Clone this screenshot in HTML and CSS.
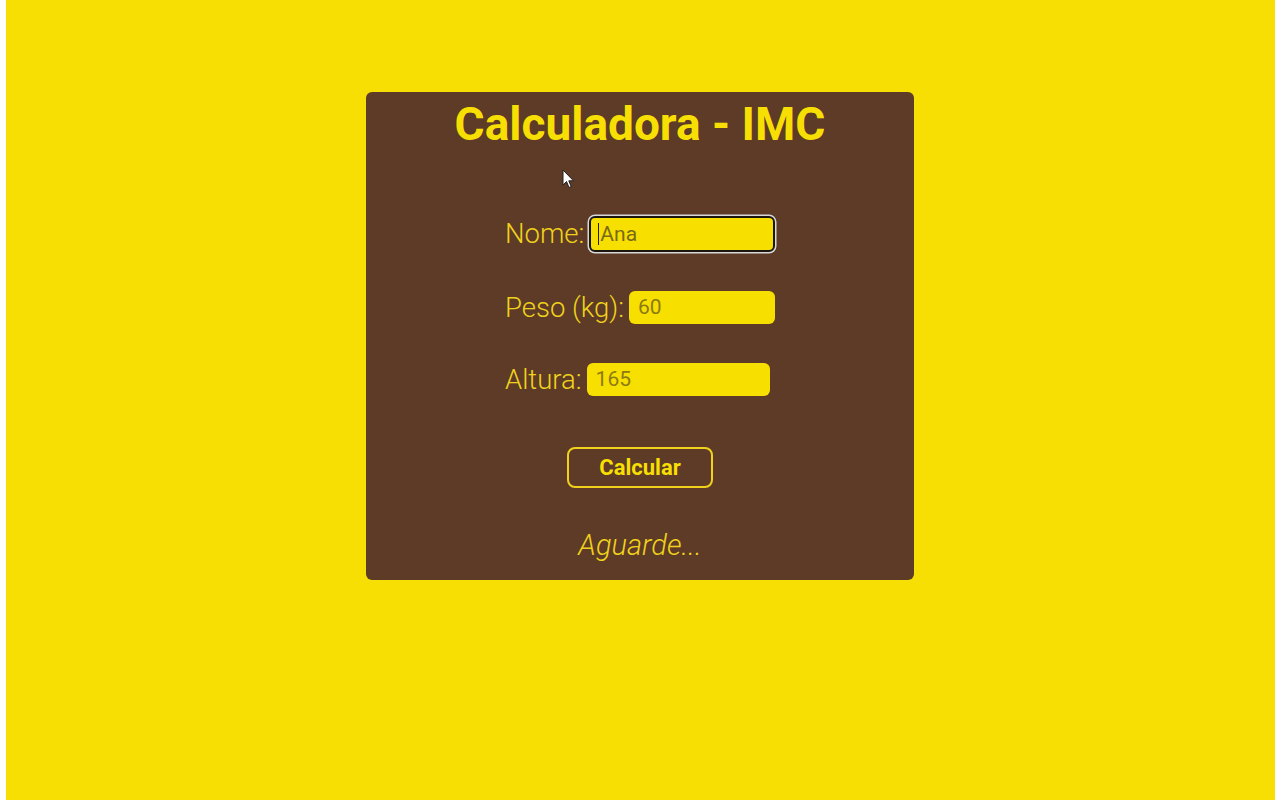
FILE: index.html
```html
<!DOCTYPE html>
<html lang="pt-BR">
<head>
<meta charset="utf-8">
<title>Calculadora - IMC</title>
<link rel="stylesheet" href="styles.css">
</head>
<body>
<div class="page">
  <main class="card">
    <h1 class="title">Calculadora - IMC</h1>
    <form class="form">
      <div class="row">
        <label class="label" for="nome">Nome:</label>
        <div class="input input-focus input-nome"><span class="caret"></span>Ana</div>
      </div>
      <div class="row">
        <label class="label" for="peso">Peso (kg):</label>
        <div class="input input-peso">60</div>
      </div>
      <div class="row">
        <label class="label" for="altura">Altura:</label>
        <div class="input input-altura">165</div>
      </div>
    </form>
    <button class="btn" type="button">Calcular</button>
    <p class="result">Aguarde...</p>
    <svg class="pointer" width="14" height="22" viewBox="0 0 14 22"><path d="M1 1 L1 16 L4.5 12.5 L7 18.5 L9.2 17.6 L6.8 11.8 L11.5 11.8 Z" fill="#fff" stroke="#222" stroke-width="1"/></svg>
  </main>
</div>
</body>
</html>
```
FILE: styles.css
```css
html, body {
  margin: 0;
  padding: 0;
  height: 100%;
  background: #ffffff;
}
body {
  font-family: Roboto, "Liberation Sans", sans-serif;
}
.page {
  margin: 0 5px 0 6px;
  height: 800px;
  background: #f7df04;
  padding-top: 92px;
  box-sizing: border-box;
}
.card {
  position: relative;
  width: 548px;
  height: 488px;
  box-sizing: border-box;
  margin: 0 0 0 360px;
  background: #5d3b26;
  border-radius: 6px;
  display: flex;
  flex-direction: column;
  align-items: center;
  padding-top: 4px;
}
.title {
  margin: 0;
  color: #f7df04;
  font-size: 46px;
  font-weight: 700;
  line-height: 56px;
}
.form {
  margin-top: 64px;
  width: 272px;
  margin-left: 2px;
  display: flex;
  flex-direction: column;
  gap: 39px;
}
.row {
  display: flex;
  align-items: center;
  gap: 5px;
}
.label {
  color: #f0d21c;
  font-size: 27.5px;
  font-weight: 300;
  line-height: 32px;
}
.input {
  height: 33px;
  box-sizing: border-box;
  background: #f7df00;
  border-radius: 6px;
  color: #8c7a12;
  font-size: 21px;
  font-weight: 400;
  line-height: 33px;
  padding-left: 9px;
  display: flex;
  align-items: center;
}
.input-nome { width: 186px; }
.input-peso { width: 146px; }
.input-altura { width: 183px; }
.input-focus {
  height: 36px;
  border: 2px solid #1c1610;
  box-shadow: 0 0 0 1.5px #d8d8d8;
  padding-left: 7px;
  color: #7a6a18;
}
.caret {
  display: inline-block;
  width: 1px;
  height: 22px;
  background: #222;
  margin-right: 1px;
}
.btn {
  margin-top: 51px;
  width: 146px;
  height: 41px;
  background: transparent;
  border: 2px solid #f0d21c;
  border-radius: 8px;
  color: #f7df04;
  font-family: Roboto, "Liberation Sans", sans-serif;
  font-size: 22px;
  font-weight: 700;
}
.result {
  margin: 42px 0 0 0;
  color: #f0d21c;
  font-size: 29px;
  font-style: italic;
  font-weight: 300;
  line-height: 30px;
}
.pointer {
  position: absolute;
  left: 196px;
  top: 77px;
}
```
